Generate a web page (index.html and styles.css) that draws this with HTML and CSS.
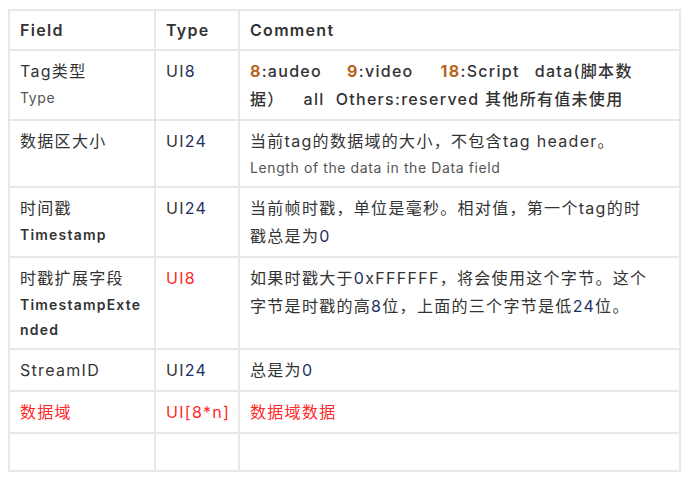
FILE: index.html
```html
<!DOCTYPE html>
<html lang="zh">
<head>
    <meta charset="UTF-8">
    <title>FLV Tag</title>
    <link rel="stylesheet" href="styles.css">
</head>
<body>
    <table class="tag-table">
        <colgroup>
            <col class="col-field">
            <col class="col-type">
            <col class="col-comment">
        </colgroup>
        <thead>
            <tr>
                <th>Field</th>
                <th>Type</th>
                <th>Comment</th>
            </tr>
        </thead>
        <tbody>
            <tr>
                <td>Tag类型<span class="sub">Type</span></td>
                <td>UI<span class="num">8</span></td>
                <td class="strong"><span class="key">8</span>:audeo<span class="gap"></span><span class="key">9</span>:video<span class="gap-l"></span><span class="key">18</span>:Script<span class="gap-s"></span>data(脚本数<br>据）<span class="gap-m"></span>all<span class="gap-xs"></span>Others:reserved 其他所有值未使用</td>
            </tr>
            <tr>
                <td>数据区大小</td>
                <td>UI<span class="num">24</span></td>
                <td>当前tag的数据域的大小，不包含tag header。<span class="sub">Length of the data in the Data field</span></td>
            </tr>
            <tr>
                <td>时间戳<span class="sub bold">Timestamp</span></td>
                <td>UI<span class="num">24</span></td>
                <td>当前帧时戳，单位是毫秒。相对值，第一个tag的时<br>戳总是为<span class="num">0</span></td>
            </tr>
            <tr>
                <td>时戳扩展字段<span class="sub bold">TimestampExte<br>nded</span></td>
                <td class="red">UI8</td>
                <td>如果时戳大于<span class="num">0</span>xFFFFFF，将会使用这个字节。这个<br>字节是时戳的高<span class="num">8</span>位，上面的三个字节是低<span class="num">24</span>位。</td>
            </tr>
            <tr>
                <td>StreamID</td>
                <td>UI<span class="num">24</span></td>
                <td>总是为<span class="num">0</span></td>
            </tr>
            <tr class="red">
                <td>数据域</td>
                <td>UI[8*n]</td>
                <td>数据域数据</td>
            </tr>
            <tr class="blank">
                <td></td>
                <td></td>
                <td></td>
            </tr>
        </tbody>
    </table>
</body>
</html>
```

FILE: styles.css
```css
:root {
    --text: #333;
    --muted: #555;
    --line: #e8e8e8;
    --red: #ff2a2a;
    --num: #1f2f63;
    --key: #b8641c;
}

* {
    box-sizing: border-box;
}

body {
    margin: 8px;
    background: #fff;
    color: var(--text);
    font-family: Inter, 'Noto Sans CJK SC', sans-serif;
    font-size: 16px;
    letter-spacing: 1.3px;
}

.tag-table {
    border-collapse: collapse;
    table-layout: fixed;
    width: 671px;
    margin-top: 1px;
}

.col-field { width: 146px; }
.col-type { width: 84px; }
.col-comment { width: 441px; }

.tag-table th,
.tag-table td {
    border: 2px solid var(--line);
    text-align: left;
    vertical-align: top;
    padding: 6px 4px 6px 10px;
    line-height: 28px;
    white-space: nowrap;
}

.tag-table th {
    font-weight: 600;
    padding-top: 5px;
    padding-bottom: 5px;
}

.sub {
    display: block;
    font-size: 14px;
    line-height: 25px;
    letter-spacing: 0.6px;
    color: var(--muted);
}

.sub.bold {
    font-weight: 600;
    color: var(--text);
    letter-spacing: 1.2px;
}

.num { color: var(--num); }

.strong { font-weight: 500; }

.key {
    color: var(--key);
    font-weight: 700;
}

.gap { display: inline-block; width: 25px; }
.gap-l { display: inline-block; width: 27px; }
.gap-s { display: inline-block; width: 15px; }
.gap-m { display: inline-block; width: 19px; }
.gap-xs { display: inline-block; width: 11px; }

.red,
.red td { color: var(--red); }

.blank td { height: 38px; }
```
